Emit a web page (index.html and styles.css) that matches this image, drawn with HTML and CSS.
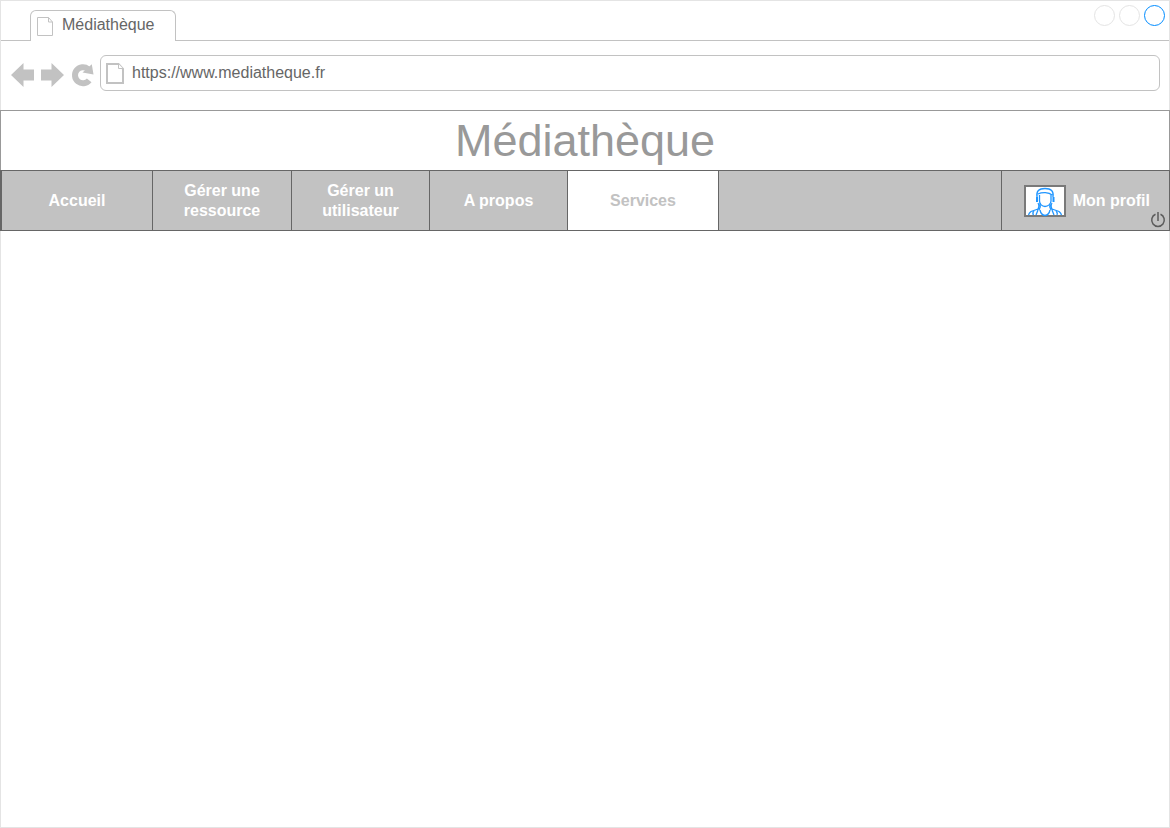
FILE: index.html
```html
<!DOCTYPE html>
<html lang="fr">
<head>
<meta charset="utf-8">
<meta name="viewport" content="width=device-width, initial-scale=1">
<title>Médiathèque</title>
<link rel="stylesheet" href="styles.css">
</head>
<body>
<div class="browser">
  <div class="tab-bar">
    <div class="tab">
      <svg class="tab-icon" width="16" height="20" viewBox="0 0 16 20" aria-hidden="true"><path d="M.5 .5H11.500L15.500 5V18.500H.5ZM11.500 .5V5H15.500"/></svg>
      <span>Médiathèque</span>
    </div>
    <div class="window-controls">
      <button class="window-button" type="button" aria-label="Réduire"></button>
      <button class="window-button" type="button" aria-label="Agrandir"></button>
      <button class="window-button window-close" type="button" aria-label="Fermer"></button>
    </div>
  </div>

  <div class="toolbar">
    <div class="tools">
      <button class="tool" type="button" aria-label="Précédent">
        <svg width="24" height="24" viewBox="0 0 24 24"><path d="M0 12 12.500 0V6.500H23V17.500H12.500V24Z"/></svg>
      </button>
      <button class="tool" type="button" aria-label="Suivant">
        <svg width="24" height="24" viewBox="0 0 24 24"><path d="M23 12 10.500 0V6.500H0V17.500H10.500V24Z"/></svg>
      </button>
      <button class="tool" type="button" aria-label="Actualiser">
        <svg width="24" height="24" viewBox="0 0 24 24"><path class="reload-ring" d="M18.200 17.300A8 8 0 1 1 17 6"/><path d="M20.800 1.200 22.500 11.500 11.500 9.500Z"/></svg>
      </button>
    </div>
    <label class="address">
      <svg class="address-icon" width="18" height="21" viewBox="0 0 18 21" aria-hidden="true"><path d="M1 1H12.500L17 6V20H1Z"/><path class="fold" d="M12.500 1V5.500H17"/></svg>
      <input class="address-input" type="text" aria-label="Adresse" value="https://www.mediatheque.fr">
    </label>
  </div>

  <header class="banner"><h1 class="site-title">Médiathèque</h1></header>

  <nav class="menu">
    <a class="menu-item wide" href="#">Accueil</a>
    <a class="menu-item medium" href="#">Gérer une<br>ressource</a>
    <a class="menu-item" href="#">Gérer un<br>utilisateur</a>
    <a class="menu-item" href="#">A propos</a>
    <a class="menu-item wide active" href="#" aria-current="page">Services</a>
    <div class="profile">
      <a class="profile-link" href="#">
        <svg class="avatar" width="42" height="32" viewBox="0 0 42 32" aria-hidden="true">
          <rect class="avatar-frame" x="1" y="1" width="40" height="30"/>
          <path d="M13 12C12 6 15 3.500 21 3.500S30 6 29 12M14 9C18 7 25 7 28 10M15.500 10V16C15.500 19 18 21.500 21 21.500S27 19 27 16V10"/>
          <path class="braids" d="M13 12V17M29.500 12V17"/>
          <path d="M14 18Q16 21 13.500 25M16 18Q17 22 15 25M28 18Q26 21 28.500 25M26 19Q25 22 27 25M14 24 7 26.500Q5 28 4.500 30M28 24 35 26.500Q37 28 37.500 30M10 26Q8 28 9.500 30M14 25 12 30M32 26Q34 28 33 30M28 25 30 30M16 25Q17 30 21 30.500Q25 30 26 25"/>
        </svg>
        <span>Mon profil</span>
      </a>
      <button class="power" type="button" aria-label="Se déconnecter">
        <svg width="16" height="16" viewBox="0 0 16 16"><path d="M5.500 2.300A6.300 6.300 0 1 0 10.500 2.300M8 0V9"/></svg>
      </button>
    </div>
  </nav>
  <main class="content"></main>
</div>
</body>
</html>
```
FILE: styles.css
```css
* {
  box-sizing: border-box;
}

body {
  margin: 0;
  background: #fff;
  font-family: "Liberation Sans", Arial, sans-serif;
  font-size: 16px;
}

button {
  padding: 0;
  border: 0;
  background: none;
}

svg {
  display: block;
  flex: none;
}

.browser {
  display: flex;
  flex-direction: column;
  min-height: 100vh;
  border: 1px solid #e4e4e4;
}

.tab-bar {
  display: flex;
  justify-content: space-between;
  height: 40px;
  padding-left: 29px;
  border-bottom: 1px solid #c2c2c2;
}

.tab {
  display: flex;
  gap: 9px;
  height: 31px;
  margin-top: 9px;
  padding: 6px 20px 0 6px;
  border: 1px solid #c2c2c2;
  border-bottom: 0;
  border-radius: 6px 6px 0 0;
  background: #fff;
  color: #666;
  line-height: 16px;
}

.tab-icon {
  fill: #fff;
  stroke: #c2c2c2;
}

.window-controls {
  display: flex;
  gap: 4px;
  padding: 4px 4px 0 0;
}

.window-button {
  width: 21px;
  height: 21px;
  border: 1px solid #e4e4e4;
  border-radius: 50%;
}

.window-close {
  border-color: #008cff;
}

.toolbar {
  display: flex;
  align-items: center;
  gap: 5px;
  height: 69px;
  padding: 0 9px 5px 10px;
}

.tools {
  display: flex;
  gap: 6px;
  padding-top: 4px;
}

.tool {
  flex: none;
  fill: #c2c2c2;
}

.reload-ring {
  fill: none;
  stroke: #c2c2c2;
  stroke-width: 6;
}

.address {
  display: flex;
  flex: 1;
  align-items: center;
  gap: 8px;
  height: 36px;
  padding: 0 6px 0 5px;
  border: 1px solid #c2c2c2;
  border-radius: 6px;
}

.address-icon {
  fill: #fff;
  stroke: #c2c2c2;
  stroke-width: 2;
}

.address-icon .fold {
  stroke-width: 1;
}

.address-input {
  flex: 1;
  min-width: 0;
  height: 34px;
  padding: 0;
  border: 0;
  outline: 0;
  background: none;
  color: #666;
  font: inherit;
}

.banner {
  margin: 0 -1px;
  border: 1px solid #999;
  border-bottom: 0;
}

.site-title {
  margin: 0;
  color: #999;
  font-size: 45px;
  font-weight: 400;
  line-height: 59px;
  text-align: center;
}

.menu {
  display: flex;
  min-height: 61px;
  margin: 0 -1px;
  border: 1px solid #666;
  border-left-width: 2px;
  background: #c2c2c2;
  font-weight: 700;
  line-height: 20px;
}

.menu-item {
  display: flex;
  flex: 0 1 138px;
  align-items: center;
  justify-content: center;
  border-right: 1px solid #666;
  color: #fff;
  text-align: center;
  text-decoration: none;
}

.medium {
  flex-basis: 139px;
}

.wide {
  flex-basis: 151px;
}

.active {
  background: #fff;
  color: #c2c2c2;
}

.profile {
  position: relative;
  display: flex;
  align-items: center;
  margin-left: auto;
  padding: 0 19px 0 22px;
  border-left: 1px solid #666;
}

.profile-link {
  display: flex;
  align-items: center;
  gap: 7px;
  color: #fff;
  text-decoration: none;
  white-space: nowrap;
}

.avatar {
  fill: none;
  stroke: #2196ff;
  stroke-width: 1.300;
}

.avatar .braids {
  stroke-width: 2;
}

.avatar .avatar-frame {
  fill: #fff;
  stroke: #797979;
  stroke-width: 2;
}

.power {
  position: absolute;
  right: 3px;
  bottom: 2px;
}

.power svg {
  fill: none;
  stroke: #5c5c5c;
  stroke-width: 1.500;
}

.content {
  flex: 1;
}
```
